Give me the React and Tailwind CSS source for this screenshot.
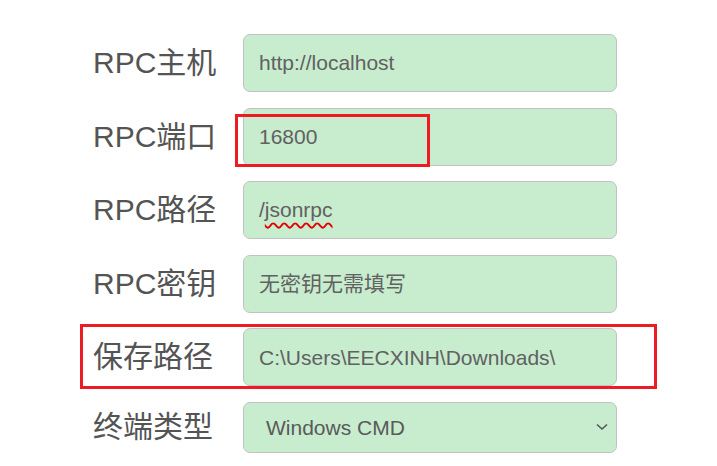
import React from 'react';

const font = { fontFamily: '"Liberation Sans", "Noto Sans CJK SC", sans-serif' };

const Field = ({ children, className = '' }) => (
  <div
    className={`flex h-[58px] w-[374px] shrink-0 items-center rounded-[7px] border border-[#c2c2c2] bg-[#c8ecce] pl-[15px] text-[21px] text-[#616161] ${className}`}
  >
    {children}
  </div>
);

const Label = ({ children }) => (
  <div className="w-[243px] shrink-0 pl-[93px] text-[30px] leading-none whitespace-nowrap text-[#545454]">
    {children}
  </div>
);

export default function App() {
  return (
    <div className="relative h-[466px] w-[717px] overflow-hidden bg-white" style={font}>
      <div className="flex flex-col gap-y-[15.6px] pt-[34px]">
        <div className="flex items-center">
          <Label>RPC主机</Label>
          <Field>http://localhost</Field>
        </div>
        <div className="flex items-center">
          <Label>RPC端口</Label>
          <Field>16800</Field>
        </div>
        <div className="flex items-center">
          <Label>RPC路径</Label>
          <Field>
            /<span className="underline decoration-wavy decoration-[#e00000] decoration-[1.5px] underline-offset-[5px]">jsonrpc</span>
          </Field>
        </div>
        <div className="flex items-center">
          <Label>RPC密钥</Label>
          <Field className="text-[#7a7a7a]">无密钥无需填写</Field>
        </div>
        <div className="flex items-center">
          <Label>保存路径</Label>
          <Field>C:\Users\EECXINH\Downloads\</Field>
        </div>
        <div className="flex items-center">
          <Label>终端类型</Label>
          <div className="flex h-[51px] w-[374px] shrink-0 items-center justify-between rounded-[7px] border border-[#c2c2c2] bg-[#c8ecce] pr-[8px] pl-[22px] text-[21px] text-[#5a5a5a]">
            <span>Windows CMD</span>
            <svg width="12" height="8" viewBox="0 0 12 8" fill="none">
              <path d="M1 1.5 L6 6 L11 1.5" stroke="#555" strokeWidth="1.6" />
            </svg>
          </div>
        </div>
      </div>

      <div className="absolute top-[114px] left-[235px] h-[53px] w-[195px] border-[3px] border-[#ed1c24]" />
      <div className="absolute top-[324px] left-[80px] h-[65px] w-[577px] border-[3px] border-[#ed1c24]" />
    </div>
  );
}
